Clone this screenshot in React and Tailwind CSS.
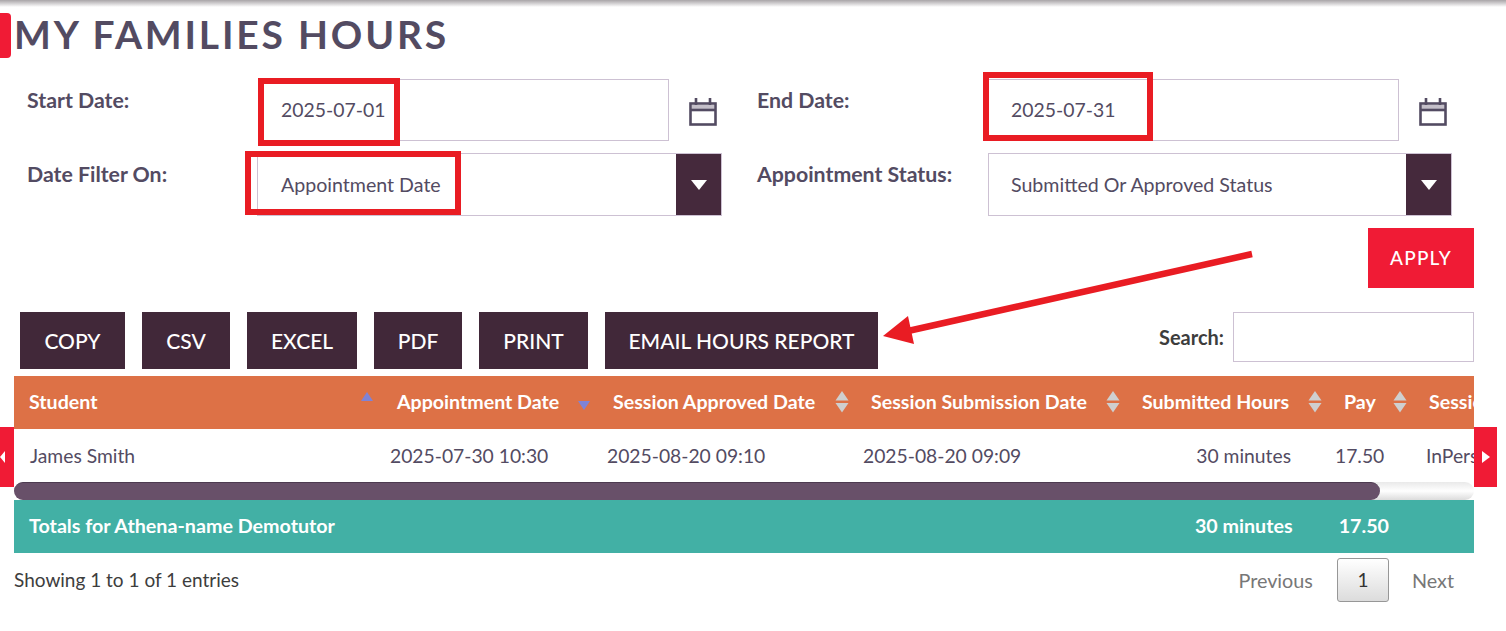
const SortIcons = ({ up = "#cfcfcf", down = "#cfcfcf" }) => (
  <svg width="16" height="24" viewBox="0 0 16 24" className="absolute top-[14px] right-[6px]">
    <path d="M8 1 L14.5 10.5 L1.5 10.5 Z" fill={up} />
    <path d="M1.5 13 L14.5 13 L8 22.5 Z" fill={down} />
  </svg>
);

const CalendarIcon = () => (
  <svg width="28" height="28" viewBox="0 0 28 28" fill="none" stroke="#534b62" strokeWidth="2.6" className="ml-5 mt-[3px] shrink-0 self-center">
    <rect x="3" y="7" width="22" height="4" fill="#c4bfc9" stroke="none" />
    <rect x="1.5" y="5.5" width="25" height="21" />
    <path d="M2 12 H26" strokeWidth="2.6" />
    <path d="M7 0 V7 M21 0 V7" strokeWidth="2.6" />
  </svg>
);

const SelectBox = ({ value, className }) => (
  <div className={`flex h-[63px] items-center border border-[#cdc1d3] ${className}`}>
    <span className="flex-1 text-[19.6px] text-[#534b62]">{value}</span>
    <div className="flex h-full w-[45px] items-center justify-center bg-[#45293c]">
      <svg width="16" height="10" viewBox="0 0 16 10"><path d="M0 0 H16 L8 10 Z" fill="#fff" /></svg>
    </div>
  </div>
);

const DateInput = ({ value }) => (
  <div className="flex h-[62px] w-[411px] items-center border border-[#cdc1d3] pl-[22px] text-[19.4px] text-[#534b62]">
    {value}
  </div>
);

const Label = ({ children, className }) => (
  <div className={`pt-[6px] text-[21.3px] font-bold text-[#534b62] ${className}`}>{children}</div>
);

const exportButtons = [
  ["COPY", "w-[105px]"],
  ["CSV", "w-[88px]"],
  ["EXCEL", "w-[110px]"],
  ["PDF", "w-[88px]"],
  ["PRINT", "w-[109px]"],
  ["EMAIL HOURS REPORT", "w-[273px]"],
];

const Annotations = () => (
  <svg width="1506" height="631" className="absolute left-0 top-0" fill="none" stroke="#e91c23" strokeWidth="6">
    <rect x="261" y="81" width="136" height="62" />
    <rect x="248" y="154" width="210" height="58" />
    <rect x="986" y="75" width="164" height="63" />
    <path d="M1252 254 L908 331" strokeWidth="6.5" />
    <path d="M883 336 L908 316 L914 344 Z" fill="#e91c23" stroke="none" />
  </svg>
);

export default function App() {
  return (
    <div className="relative h-[631px] w-full overflow-hidden bg-white font-['Lato','Open_Sans',sans-serif] text-[#534b62]">
      <div className="h-[7px] bg-gradient-to-b from-[#a9a5a8] to-white" />

      <h1 className="ml-[14px] mt-[6px] h-[41px] text-[39px] font-bold leading-[42px] tracking-[2.8px] text-[#534b62]">
        MY FAMILIES HOURS
      </h1>

      <div className="ml-[27px] mt-[25px] flex w-[1425px] flex-col gap-[12px]">
        <div className="flex">
          <Label className="w-[231px]">Start Date:</Label>
          <DateInput value="2025-07-01" />
          <CalendarIcon />
          <Label className="ml-[40px] w-[231px]">End Date:</Label>
          <DateInput value="2025-07-31" />
          <CalendarIcon />
        </div>
        <div className="flex">
          <Label className="w-[230px]">Date Filter On:</Label>
          <SelectBox value="Appointment Date" className="w-[465px] pl-[23px]" />
          <Label className="ml-[35px] w-[231px]">Appointment Status:</Label>
          <SelectBox value="Submitted Or Approved Status" className="w-[464px] pl-[22px]" />
        </div>
      </div>

      <div className="ml-[1368px] mt-[12px] flex h-[60px] w-[106px] items-center justify-center bg-[#f01b35] text-[19px] font-medium tracking-[1.2px] text-white">
        APPLY
      </div>

      <div className="ml-[20px] mt-[24px] flex w-[1454px] items-start">
        <div className="flex gap-[17px]">
          {exportButtons.map(([text, width]) => (
            <div key={text} className={`flex h-[57px] items-center justify-center bg-[#412839] text-[21px] font-medium text-white ${width}`}>
              {text}
            </div>
          ))}
        </div>
        <div className="ml-auto flex items-center gap-[9px]">
          <span className="text-[20px] font-bold text-[#3d3d3d]">Search:</span>
          <div className="h-[50px] w-[241px] border border-[#cdc1d3]" />
        </div>
      </div>

      <div className="relative ml-[14px] mt-[7px] w-[1460px]">
        <div className="overflow-hidden">
          <table className="w-[1520px] table-fixed border-collapse">
            <colgroup>
              <col className="w-[368px]" />
              <col className="w-[216px]" />
              <col className="w-[258px]" />
              <col className="w-[271px]" />
              <col className="w-[202px]" />
              <col className="w-[85px]" />
              <col className="w-[120px]" />
            </colgroup>
            <thead>
              <tr className="h-[53px] bg-[#dd7146] text-left text-[19.6px] font-bold text-white">
                <th className="relative pb-[2px] pl-[15px] font-bold">
                  Student
                  <svg width="16" height="12" viewBox="0 0 16 12" className="absolute right-[7px] top-[15px]"><path d="M8 1 L14 10 L2 10 Z" fill="#7f83d6" /></svg>
                </th>
                <th className="relative whitespace-nowrap pb-[2px] pl-[15px] font-bold">
                  Appointment Date
                  <svg width="16" height="12" viewBox="0 0 16 12" className="absolute right-[6px] top-[24px]"><path d="M2 1 L14 1 L8 10 Z" fill="#7f83d6" /></svg>
                </th>
                <th className="relative whitespace-nowrap pb-[2px] pl-[15px] font-bold">Session Approved Date<SortIcons /></th>
                <th className="relative whitespace-nowrap pb-[2px] pl-[15px] font-bold">Session Submission Date<SortIcons /></th>
                <th className="relative whitespace-nowrap pb-[2px] pl-[15px] font-bold">Submitted Hours<SortIcons /></th>
                <th className="relative whitespace-nowrap pb-[2px] pl-[15px] font-bold">Pay<SortIcons /></th>
                <th className="whitespace-nowrap pb-[2px] pl-[15px] font-bold">Session Type</th>
              </tr>
            </thead>
            <tbody>
              <tr className="h-[53px] text-[19.3px] text-[#534b62]">
                <td className="pl-[16px] pt-[2px]">James Smith</td>
                <td className="whitespace-nowrap pl-[8px] pt-[2px]">2025-07-30 10:30</td>
                <td className="whitespace-nowrap pl-[9px] pt-[2px]">2025-08-20 09:10</td>
                <td className="whitespace-nowrap pl-[7px] pt-[2px]">2025-08-20 09:09</td>
                <td className="whitespace-nowrap pr-[38px] pt-[2px] text-right">30 minutes</td>
                <td className="pl-[6px] pt-[2px]">17.50</td>
                <td className="pl-[12px] pt-[2px]">InPerson</td>
              </tr>
            </tbody>
          </table>
        </div>

        <div className="h-[18px] rounded-full bg-gradient-to-b from-[#e9e9e9] via-white to-[#dcdcdc]">
          <div className="h-full w-[1366px] rounded-full border-t border-[#4d3b50] bg-[#685069]" />
        </div>

        <div className="flex h-[53px] items-center bg-[#42b0a5] pb-[2px] text-[19.7px] font-bold text-white">
          <span className="pl-[15px]">Totals for Athena-name Demotutor</span>
          <span className="ml-auto">30 minutes</span>
          <span className="ml-[46px] mr-[85px]">17.50</span>
        </div>

        {/* red scroll tabs either side of the table */}
        <div className="absolute left-[-14px] top-[51px] flex h-[60px] w-[14px] items-center bg-[#f01b35]">
          <svg width="6" height="12" viewBox="0 0 6 12"><path d="M5 0 V12 L0 6 Z" fill="#fff" /></svg>
        </div>
        <div className="absolute right-[-23px] top-[51px] flex h-[60px] w-[23px] items-center justify-center bg-[#f01b35]">
          <svg width="8" height="12" viewBox="0 0 8 12"><path d="M0 0 V12 L8 6 Z" fill="#fff" /></svg>
        </div>
      </div>

      <div className="ml-[14px] mt-[5px] flex w-[1460px] items-center">
        <span className="text-[19px] text-[#3d3d3d]">Showing 1 to 1 of 1 entries</span>
        <div className="ml-auto flex items-center text-[19.8px] text-[#777]">
          <span className="pt-[2px]">Previous</span>
          <div className="ml-[24px] flex h-[44px] w-[52px] items-center justify-center rounded-[3px] border border-[#979797] bg-gradient-to-b from-white to-[#dcdcdc] text-[19px] text-[#333]">1</div>
          <span className="ml-[23px] mr-[20px] pt-[2px]">Next</span>
        </div>
      </div>

      <div className="absolute left-0 top-[13px] h-[45px] w-[11px] rounded-r-[4px] bg-[#f01b35]" />
      <Annotations />
    </div>
  );
}
